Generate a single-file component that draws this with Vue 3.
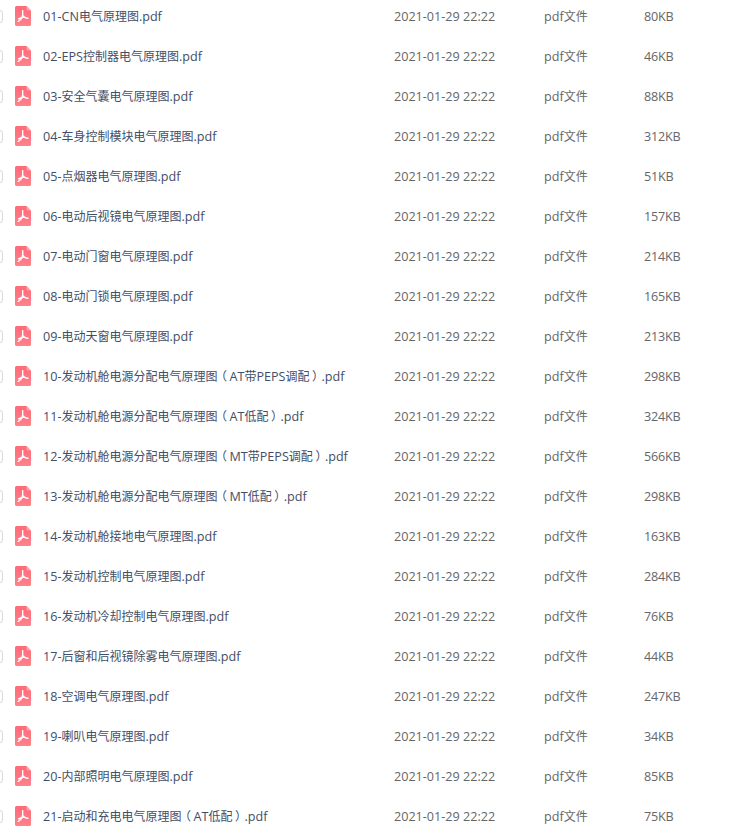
<script setup>
const files = [
  ['01-CN电气原理图.pdf', '80KB'],
  ['02-EPS控制器电气原理图.pdf', '46KB'],
  ['03-安全气囊电气原理图.pdf', '88KB'],
  ['04-车身控制模块电气原理图.pdf', '312KB'],
  ['05-点烟器电气原理图.pdf', '51KB'],
  ['06-电动后视镜电气原理图.pdf', '157KB'],
  ['07-电动门窗电气原理图.pdf', '214KB'],
  ['08-电动门锁电气原理图.pdf', '165KB'],
  ['09-电动天窗电气原理图.pdf', '213KB'],
  ['10-发动机舱电源分配电气原理图（AT带PEPS调配）.pdf', '298KB'],
  ['11-发动机舱电源分配电气原理图（AT低配）.pdf', '324KB'],
  ['12-发动机舱电源分配电气原理图（MT带PEPS调配）.pdf', '566KB'],
  ['13-发动机舱电源分配电气原理图（MT低配）.pdf', '298KB'],
  ['14-发动机舱接地电气原理图.pdf', '163KB'],
  ['15-发动机控制电气原理图.pdf', '284KB'],
  ['16-发动机冷却控制电气原理图.pdf', '76KB'],
  ['17-后窗和后视镜除雾电气原理图.pdf', '44KB'],
  ['18-空调电气原理图.pdf', '247KB'],
  ['19-喇叭电气原理图.pdf', '34KB'],
  ['20-内部照明电气原理图.pdf', '85KB'],
  ['21-启动和充电电气原理图（AT低配）.pdf', '75KB'],
]

// CJK runs are set a little smaller than the latin ones, brackets get centred in their box
const runs = (s) =>
  s.match(/（|）|[\u4e00-\u9fff]+|[^\u4e00-\u9fff（）]+/g).map((text) => ({
    text,
    cls: {
      cjk: /[\u4e00-\u9fff（）]/.test(text),
      bracket: text === '（' || text === '）',
    },
  }))
</script>

<template>
  <div class="file-list">
    <div v-for="f in files" :key="f[0]" class="file-row">
      <span class="check"></span>
      <svg class="pdf-icon" width="16" height="20" viewBox="0 0 16 20">
        <defs>
          <linearGradient id="pdfBg" x1="0" y1="0" x2="0" y2="1">
            <stop offset="0" stop-color="#ff6b78" />
            <stop offset="1" stop-color="#ff808d" />
          </linearGradient>
        </defs>
        <path d="M1.500 0H11.500L16 4.500V18.500A1.500 1.500 0 0 1 14.500 20H1.500A1.500 1.500 0 0 1 0 18.500V1.500A1.500 1.500 0 0 1 1.500 0Z" fill="url(#pdfBg)" />
        <path d="M11.500 0L16 4.500H13A1.500 1.500 0 0 1 11.500 3Z" fill="#ffa3ac" />
        <path d="M7.700 4.800C8 8 7.800 10 6.800 12C6 13.500 4.800 14.600 3.200 15.400M7.500 9.200C8.500 11 10.300 12.300 13 12.300M8.800 11C6.800 11.400 5.200 12 3.600 12.800" fill="none" stroke="#fff" stroke-width="1.400" stroke-linecap="round" stroke-linejoin="round" />
      </svg>
      <span class="name"><span v-for="(r, i) in runs(f[0])" :key="i" :class="r.cls">{{ r.text }}</span></span>
      <span class="cell time">2021-01-29 22:22</span>
      <span class="cell type">pdf<span class="cjk">文件</span></span>
      <span class="cell size">{{ f[1] }}</span>
    </div>
  </div>
</template>

<style scoped>
.file-list {
  margin-top: -4px;
  font-family: "Open Sans", "Noto Sans CJK SC", sans-serif;
  font-size: 12.6px;
  color: #666;
}
.file-row {
  display: grid;
  grid-template-columns: 15px 28px 351px 150px 100px 1fr;
  align-items: center;
  height: 40px;
  line-height: 38px;
}
.check {
  width: 13px;
  height: 13px;
  margin-left: -10px;
  box-sizing: border-box;
  border: 1px solid #d9d9d9;
  border-radius: 3px;
  background: #fff;
}
.pdf-icon {
  display: block;
}
.name {
  color: #424e67;
  white-space: nowrap;
}
.cjk {
  font-family: "Noto Sans CJK SC", sans-serif;
  font-size: 12px;
}
.bracket {
  font-feature-settings: "palt";
  padding: 0 3px;
}
.cell {
  white-space: nowrap;
}
.time,
.size {
  padding-top: 2px;
}
.size {
  letter-spacing: -0.2px;
}
</style>

<style>
html, body {
  background: #fff;
  overflow: hidden;
}
</style>
